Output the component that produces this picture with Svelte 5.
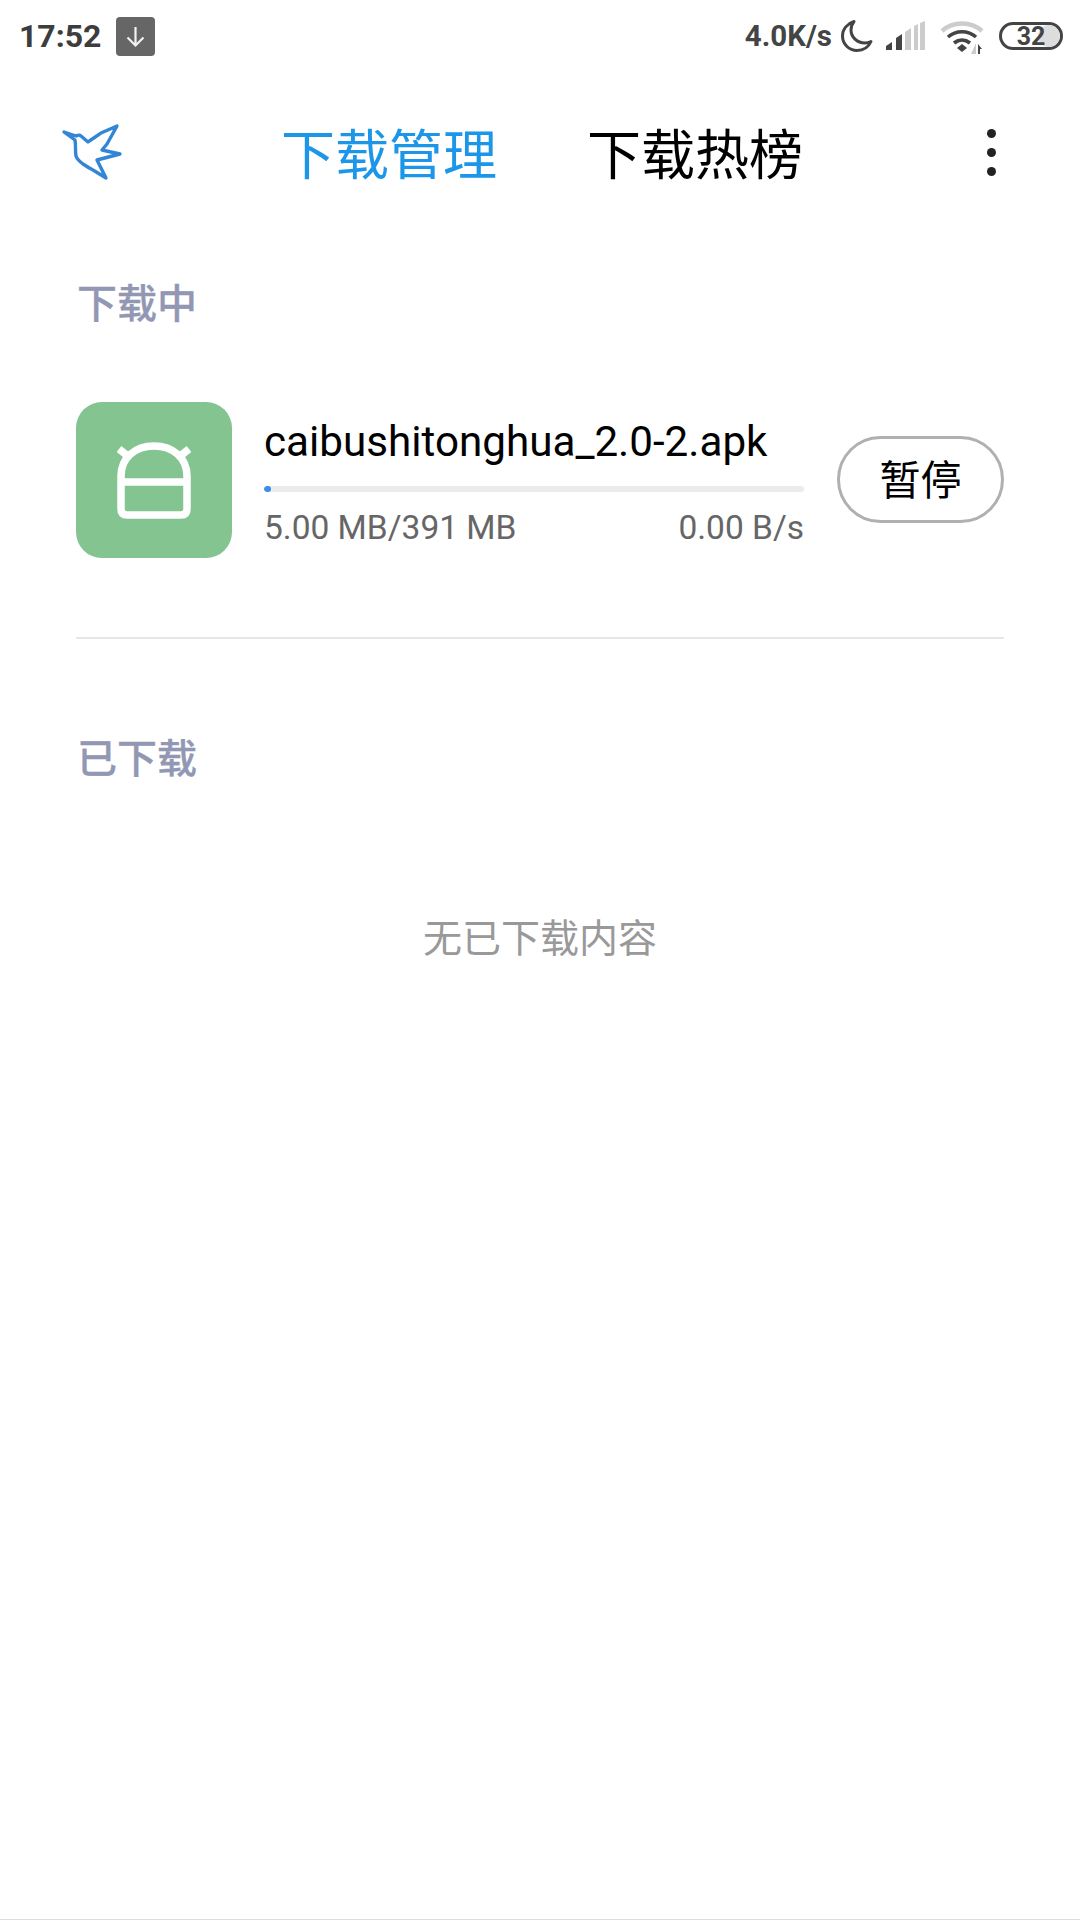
<script>
  const tabs = [
    { label: '下载管理', active: true },
    { label: '下载热榜', active: false }
  ];
</script>

<div class="page">
  <header class="status">
    <div class="status-left">
      <span class="time">17:52</span>
      <span class="dl-badge">
        <svg width="39" height="39" viewBox="0 0 39 39">
          <path d="M19.5 10v18M11.5 20.5l8 8 8-8" fill="none" stroke="#f2f2f2" stroke-width="2.2" />
        </svg>
      </span>
    </div>
    <div class="status-right">
      <span class="speed">4.0K/s</span>
      <svg class="moon" width="34" height="34" viewBox="0 0 34 34">
        <path d="M14 2.500C8 4.500 2.500 9.500 2.500 17c0 8 6.500 14.500 14.500 14.500 6.500 0 11.500-3.500 14-9-2 1-4 1.500-6 1.500C17 24 11 18 11 11c0-3 1-6 3-8.500z" fill="none" stroke="#444" stroke-width="3" stroke-linejoin="round" />
      </svg>
      <svg class="signal" width="42" height="30" viewBox="0 0 42 30">
        <path d="M1 29v-4l6-4v8z" fill="#444" />
        <path d="M11 29V17l6-4v16z" fill="#444" />
        <path d="M20 29V11l6-4v22z" fill="#ccc" />
        <path d="M29 29V5l4-2v26z M35 29V2l5-2v29z" fill="#ccc" />
      </svg>
      <svg class="wifi" width="44" height="34" viewBox="0 0 44 34">
        <path d="M2 10C13 0 31 0 42 10" fill="none" stroke="#ccc" stroke-width="4.500" />
        <path d="M8 16c8-7 20-7 28 0" fill="none" stroke="#444" stroke-width="3.600" />
        <path d="M14 22c5-4 11-4 16 0" fill="none" stroke="#444" stroke-width="3.600" />
        <path d="M22 23l5 4-5 4-5-4z" fill="#444" />
        <path d="M36 22v11h-5z" fill="#ccc" />
        <path d="M38 23l4 5h-2v5h-2z" fill="#444" />
      </svg>
      <span class="battery">
        <span class="battery-fill"></span>
        <span class="battery-num">32</span>
      </span>
    </div>
  </header>

  <nav class="nav">
    <svg class="bird" width="64" height="60" viewBox="0 0 64 60">
      <path d="M3 10L15 14C17 13 19 13 20 14L27 20C31 17 36 14 40 11L56 4L46 22L41 28L59 32L36 38L45 56L32 48C28 46 25 44 22 42C18 39 16 37 15 34C14 28 15 24 14 18z" fill="none" stroke="#3385d6" stroke-width="3.400" stroke-linejoin="round" stroke-linecap="round" />
    </svg>
    <div class="tabs">
      {#each tabs as tab}
        <span class="tab" class:active={tab.active}>{tab.label}</span>
      {/each}
    </div>
    <div class="more">
      <span class="dot"></span>
      <span class="dot"></span>
      <span class="dot"></span>
    </div>
  </nav>

  <main class="content">
    <h2 class="section first">下载中</h2>

    <div class="item">
      <div class="app-icon">
        <svg width="74" height="77" viewBox="0 0 74 77">
          <path d="M2 7l10 8M72 7l-10 8" fill="none" stroke="#fff" stroke-width="7.500" />
          <path d="M4 40V34C4 16 18 4 37 4S70 16 70 34V67q0 6-6 6H10q-6 0-6-6zM4 40h66" fill="none" stroke="#fff" stroke-width="7.500" stroke-linejoin="round" />
        </svg>
      </div>
      <div class="info">
        <div class="name">caibushitonghua_2.0-2.apk</div>
        <div class="track"><div class="bar" style="width: 1.300%"></div></div>
        <div class="meta">
          <span>5.00 MB/391 MB</span>
          <span>0.00 B/s</span>
        </div>
      </div>
      <button class="pause">暂停</button>
    </div>

    <hr class="divider" />

    <h2 class="section second">已下载</h2>
    <p class="empty">无已下载内容</p>
  </main>
</div>

<style>
  :global(body) {
    margin: 0;
    background: #fff;
  }
  .page {
    width: 1080px;
    height: 1920px;
    box-sizing: border-box;
    border-bottom: 1px solid #ddd;
    background: #fff;
    font-family: Roboto, "Noto Sans CJK SC", sans-serif;
    overflow: hidden;
    display: flex;
    flex-direction: column;
  }
  .status {
    height: 72px;
    display: flex;
    justify-content: space-between;
    align-items: center;
    padding: 0 17px 0 19px;
  }
  .status-left {
    display: flex;
    align-items: center;
    gap: 15px;
  }
  .time {
    font-size: 32px;
    font-weight: 700;
    color: #3d3d3d;
  }
  .dl-badge {
    width: 39px;
    height: 39px;
    background: #666;
    border-radius: 4px;
    display: flex;
  }
  .status-right {
    display: flex;
    align-items: center;
  }
  .speed {
    font-size: 29.500px;
    font-weight: 700;
    color: #444;
    margin-right: 8px;
  }
  .signal {
    margin-left: 11px;
  }
  .wifi {
    margin-left: 13px;
    margin-top: 4px;
  }
  .battery {
    position: relative;
    margin-left: 15px;
    width: 64px;
    height: 28px;
    box-sizing: border-box;
    border: 3px solid #444;
    border-radius: 14px;
    display: flex;
    align-items: center;
    justify-content: center;
    overflow: hidden;
  }
  .battery-fill {
    position: absolute;
    right: 0;
    top: 0;
    bottom: 0;
    width: 22px;
    background: #ddd;
    border-radius: 11px;
  }
  .battery-num {
    position: relative;
    font-size: 25px;
    font-weight: 700;
    color: #444;
    line-height: 1;
  }
  .nav {
    height: 166px;
    display: flex;
    align-items: center;
    padding-left: 61px;
  }
  .bird {
    flex: none;
    margin-top: -6px;
  }
  .tabs {
    display: flex;
    gap: 90px;
    margin-left: 156px;
    margin-top: 4px;
  }
  .tab {
    font-size: 54px;
    color: #000;
    line-height: 1.2;
  }
  .tab.active {
    color: #1b96e8;
  }
  .more {
    display: flex;
    flex-direction: column;
    gap: 10px;
    margin-left: 184px;
    margin-top: -6px;
  }
  .dot {
    width: 9px;
    height: 9px;
    background: #222;
    border-radius: 50%;
  }
  .content {
    padding: 0 76px;
    display: flex;
    flex-direction: column;
  }
  .section {
    margin: 0;
    font-size: 40px;
    font-weight: 500;
    line-height: 48px;
    color: #9297b3;
    padding-left: 1px;
    -webkit-text-stroke: 0.3px #9297b3;
  }
  .section.first {
    margin-top: 43px;
  }
  .item {
    display: flex;
    align-items: flex-start;
    margin-top: 73px;
  }
  .app-icon {
    flex: none;
    width: 156px;
    height: 156px;
    background: #83c490;
    border-radius: 26px;
    display: flex;
    align-items: center;
    justify-content: center;
  }
  .info {
    width: 540px;
    margin-left: 32px;
    flex: none;
  }
  .name {
    font-size: 42.200px;
    line-height: 46px;
    color: #000;
    margin-top: 17px;
    white-space: nowrap;
  }
  .track {
    height: 6px;
    background: #ebebeb;
    border-radius: 3px;
    margin-top: 21px;
    overflow: hidden;
  }
  .bar {
    height: 100%;
    background: #3a8ee6;
    border-radius: 3px;
  }
  .meta {
    display: flex;
    justify-content: space-between;
    font-size: 33.500px;
    line-height: 38px;
    color: #666;
    margin-top: 17px;
  }
  .pause {
    flex: none;
    width: 167px;
    height: 87px;
    margin: 34px 0 0 33px;
    padding: 0 0 5px;
    background: #fff;
    border: 3px solid #b0b0b0;
    border-radius: 44px;
    font-family: inherit;
    font-size: 41px;
    color: #000;
  }
  .divider {
    height: 2px;
    border: 0;
    background: #e6e6e6;
    margin: 79px 0 0;
    width: 928px;
  }
  .section.second {
    margin-top: 97px;
  }
  .empty {
    margin: 131px 0 0;
    font-size: 39px;
    line-height: 48px;
    color: #999;
    text-align: center;
  }
</style>
